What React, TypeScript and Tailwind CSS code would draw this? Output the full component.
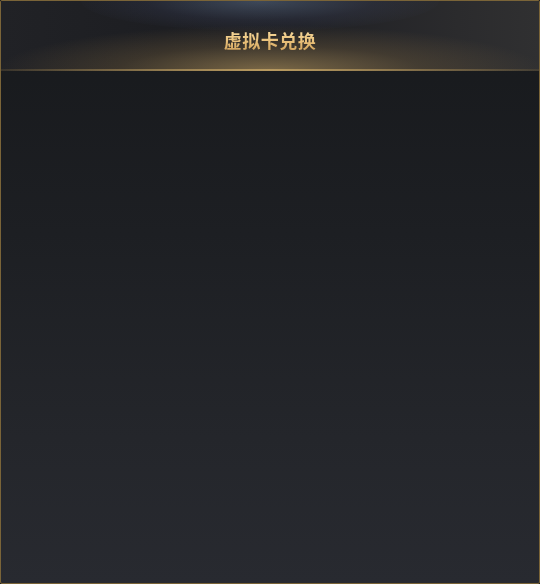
import React from "react";

export default function App() {
  return (
    <div className="w-[540px] h-[584px] bg-[#1a1b1f]">
      <div className="w-full h-full border border-[#7a6438] rounded-[2px] flex flex-col overflow-hidden bg-[linear-gradient(180deg,#17191c_0%,#1d1f23_40%,#24262b_75%,#282a30_100%)]">
        <div className="relative h-[70px] shrink-0 flex items-center justify-center bg-[#232428] overflow-hidden">
          <div className="absolute inset-0 bg-[linear-gradient(90deg,#212226_0%,#1d1e22_30%,#1f2024_55%,#2b2b2d_85%,#303031_100%)]" />
          <div className="absolute left-[80px] right-[100px] top-[-30px] h-[60px] rounded-[50%] bg-[radial-gradient(ellipse_at_center,rgba(110,135,170,0.4)_0%,rgba(70,80,120,0.18)_45%,rgba(0,0,0,0)_75%)]" />
          <div className="absolute left-[0px] right-[0px] bottom-[-45px] h-[90px] bg-[radial-gradient(ellipse_at_center,rgba(200,165,100,0.55)_0%,rgba(150,120,70,0.25)_40%,rgba(0,0,0,0)_72%)]" />
          <div className="absolute left-0 right-0 bottom-0 h-[2px] bg-[linear-gradient(90deg,rgba(120,100,60,0.25)_0%,#b89a60_50%,rgba(120,100,60,0.25)_100%)]" />
          <span
            className="relative text-[18px] font-bold tracking-[0.5px] bg-[linear-gradient(180deg,#fbe2a8_0%,#e8bf78_55%,#c99a55_100%)] bg-clip-text text-transparent mt-[8px]"
            style={{ fontFamily: '"Noto Sans CJK SC", "Noto Sans", sans-serif' }}
          >
            虚拟卡兑换
          </span>
        </div>
        <div className="flex-1" />
      </div>
    </div>
  );
}
